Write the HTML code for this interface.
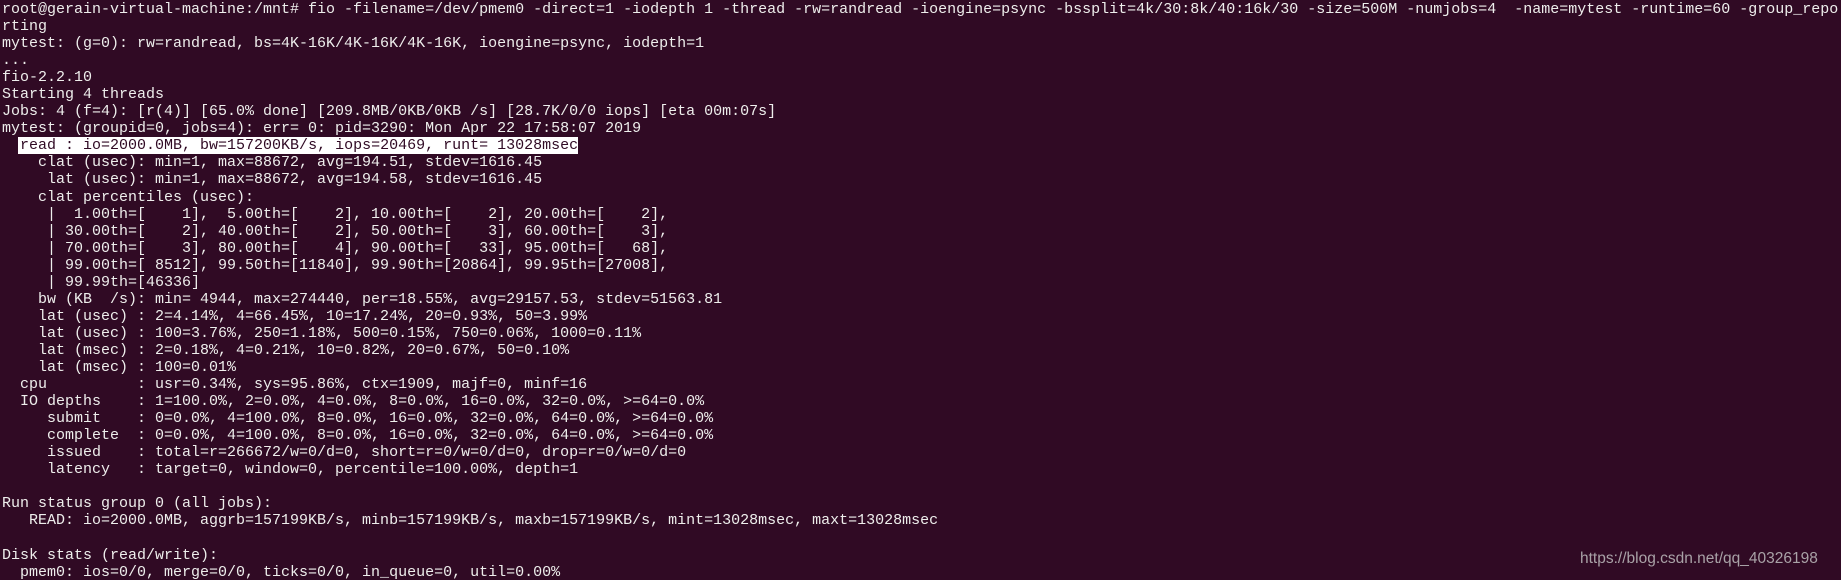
<!DOCTYPE html>
<html><head><meta charset="utf-8"><style>
html,body{margin:0;padding:0;background:#300a24;width:1841px;height:580px;overflow:hidden}
pre{margin:0;padding:1px 0 0 2px;font-family:"Liberation Mono","DejaVu Sans Mono",monospace;font-size:15px;line-height:17.05px;color:#eeeeec;white-space:pre}
.hl{background:#fff;color:#300a24;margin-left:-2px;padding-left:2px}
.wm{position:absolute;left:1580px;top:550px;font-family:"Liberation Sans",sans-serif;font-size:15.5px;color:#a9a2a7}
</style></head><body>
<pre>root@gerain-virtual-machine:/mnt# fio -filename=/dev/pmem0 -direct=1 -iodepth 1 -thread -rw=randread -ioengine=psync -bssplit=4k/30:8k/40:16k/30 -size=500M -numjobs=4  -name=mytest -runtime=60 -group_repo
rting
mytest: (g=0): rw=randread, bs=4K-16K/4K-16K/4K-16K, ioengine=psync, iodepth=1
...
fio-2.2.10
Starting 4 threads
Jobs: 4 (f=4): [r(4)] [65.0% done] [209.8MB/0KB/0KB /s] [28.7K/0/0 iops] [eta 00m:07s]
mytest: (groupid=0, jobs=4): err= 0: pid=3290: Mon Apr 22 17:58:07 2019
  <span class="hl">read : io=2000.0MB, bw=157200KB/s, iops=20469, runt= 13028msec</span>
    clat (usec): min=1, max=88672, avg=194.51, stdev=1616.45
     lat (usec): min=1, max=88672, avg=194.58, stdev=1616.45
    clat percentiles (usec):
     |  1.00th=[    1],  5.00th=[    2], 10.00th=[    2], 20.00th=[    2],
     | 30.00th=[    2], 40.00th=[    2], 50.00th=[    3], 60.00th=[    3],
     | 70.00th=[    3], 80.00th=[    4], 90.00th=[   33], 95.00th=[   68],
     | 99.00th=[ 8512], 99.50th=[11840], 99.90th=[20864], 99.95th=[27008],
     | 99.99th=[46336]
    bw (KB  /s): min= 4944, max=274440, per=18.55%, avg=29157.53, stdev=51563.81
    lat (usec) : 2=4.14%, 4=66.45%, 10=17.24%, 20=0.93%, 50=3.99%
    lat (usec) : 100=3.76%, 250=1.18%, 500=0.15%, 750=0.06%, 1000=0.11%
    lat (msec) : 2=0.18%, 4=0.21%, 10=0.82%, 20=0.67%, 50=0.10%
    lat (msec) : 100=0.01%
  cpu          : usr=0.34%, sys=95.86%, ctx=1909, majf=0, minf=16
  IO depths    : 1=100.0%, 2=0.0%, 4=0.0%, 8=0.0%, 16=0.0%, 32=0.0%, &gt;=64=0.0%
     submit    : 0=0.0%, 4=100.0%, 8=0.0%, 16=0.0%, 32=0.0%, 64=0.0%, &gt;=64=0.0%
     complete  : 0=0.0%, 4=100.0%, 8=0.0%, 16=0.0%, 32=0.0%, 64=0.0%, &gt;=64=0.0%
     issued    : total=r=266672/w=0/d=0, short=r=0/w=0/d=0, drop=r=0/w=0/d=0
     latency   : target=0, window=0, percentile=100.00%, depth=1

Run status group 0 (all jobs):
   READ: io=2000.0MB, aggrb=157199KB/s, minb=157199KB/s, maxb=157199KB/s, mint=13028msec, maxt=13028msec

Disk stats (read/write):
  pmem0: ios=0/0, merge=0/0, ticks=0/0, in_queue=0, util=0.00%</pre>
<div class="wm">https://blog.csdn.net/qq_40326198</div>
</body></html>
